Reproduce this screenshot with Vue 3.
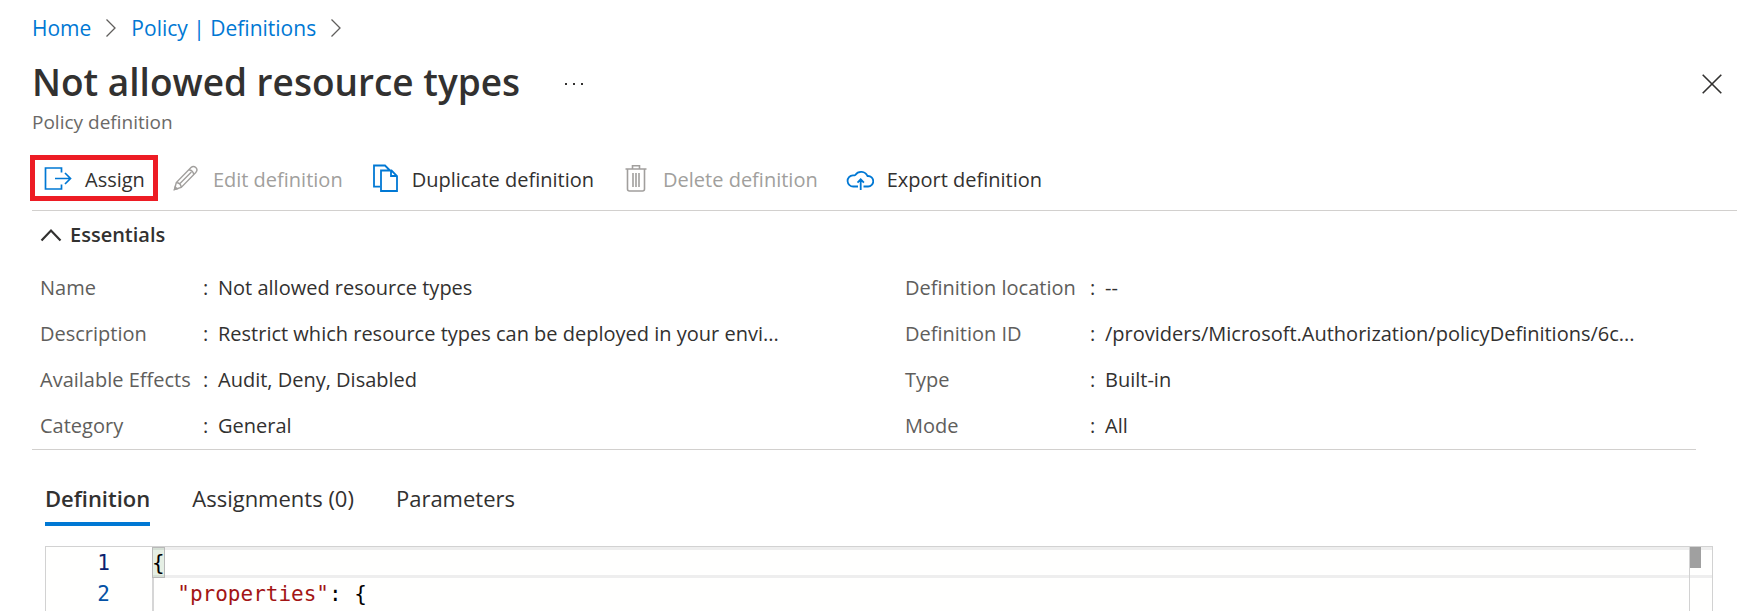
<script setup>
import { ref } from 'vue'

const leftFacts = [
  { label: 'Name', value: 'Not allowed resource types' },
  { label: 'Description', value: 'Restrict which resource types can be deployed in your envi...' },
  { label: 'Available Effects', value: 'Audit, Deny, Disabled' },
  { label: 'Category', value: 'General' },
]
const rightFacts = [
  { label: 'Definition location', value: '--' },
  { label: 'Definition ID', value: '/providers/Microsoft.Authorization/policyDefinitions/6c...' },
  { label: 'Type', value: 'Built-in' },
  { label: 'Mode', value: 'All' },
]
const tabs = ['Definition', 'Assignments (0)', 'Parameters']
const activeTab = ref('Definition')
const open = ref(true)
</script>

<template>
  <main class="page">
    <nav class="crumbs" aria-label="Breadcrumb">
      <a href="#">Home</a>
      <svg width="12" height="20" viewBox="0 0 12 20" aria-hidden="true"><path d="M1.500 1.500 10 10 1.500 18.500" /></svg>
      <a href="#">Policy | Definitions</a>
      <svg width="12" height="20" viewBox="0 0 12 20" aria-hidden="true"><path d="M1.500 1.500 10 10 1.500 18.500" /></svg>
    </nav>

    <header class="head">
      <h1>Not allowed resource types</h1>
      <button class="icon-btn more" type="button" aria-label="More">
        <svg width="20" height="4" viewBox="0 0 20 4"><path d="M1 1h2v2H1zM9 1h2v2H9zM17 1h2v2h-2z" fill="#323130" /></svg>
      </button>
      <button class="icon-btn close" type="button" aria-label="Close">
        <svg width="20" height="20" viewBox="0 0 20 20" fill="none" stroke="#323130" stroke-width="1.600"><path d="M.7.7l18.600 18.600M19.300.7.7 19.300" /></svg>
      </button>
    </header>
    <p class="subtitle">Policy definition</p>

    <div class="toolbar">
      <button class="cmd marked" type="button">
        <svg width="28" height="28" viewBox="0 0 28 28" fill="none" stroke="#0078d4" stroke-width="1.700">
          <path d="M17.500 8.500V4H1.500v21h16v-4.500M11 14.500h15.500M21 9l5.500 5.500-5.500 5.500" />
        </svg>
        <span>Assign</span>
      </button>
      <button class="cmd" type="button" disabled>
        <svg width="28" height="28" viewBox="0 0 28 28" fill="none" stroke="#a19f9d" stroke-width="1.400">
          <path d="M2.500 25.500l1.800-7L19 3.600a3.400 3.400 0 0 1 4.800 0 3.400 3.400 0 0 1 0 4.800L9.200 23.500zM4.300 18.500c2.600.2 4.700 2.200 4.900 5M17 5.700c2.500.4 4.300 2.200 4.700 4.700M19.400 8L7.500 20" />
          <path d="M2.500 25.500l.7-2.600 1.900 1.900z" fill="#a19f9d" />
        </svg>
        <span>Edit definition</span>
      </button>
      <button class="cmd" type="button">
        <svg width="28" height="28" viewBox="0 0 28 28" fill="none" stroke="#0078d4" stroke-width="1.800">
          <path d="M9 22.600H3V1.500h11l4.500 4.500M10 6.500h10.500l5.500 5.500v15H10zM20 6.500V12h6" />
        </svg>
        <span>Duplicate definition</span>
      </button>
      <button class="cmd" type="button" disabled>
        <svg width="28" height="28" viewBox="0 0 28 28" fill="none" stroke="#a19f9d" stroke-width="1.600">
          <path d="M3.500 5h21M10.500 5V1.800h7V5M5.500 5v20a2 2 0 0 0 2 2h13a2 2 0 0 0 2-2V5M11 9v14M14 9v14M17 9v14" />
        </svg>
        <span>Delete definition</span>
      </button>
      <button class="cmd" type="button">
        <svg width="28" height="28" viewBox="0 0 28 28" fill="none" stroke="#0078d4" stroke-width="1.800">
          <path d="M12 22.500H7.500a5.500 5.500 0 0 1-.6-11.200c1.100 0 1.800 0 2.400-.4a7 7 0 0 1 12.200 1.100h.4a5.200 5.200 0 0 1 .2 10.500H17.500M14.700 26V15.500M11.500 18.700l3.200-3.300 3.200 3.300" />
        </svg>
        <span>Export definition</span>
      </button>
    </div>

    <section class="essentials">
      <button class="toggle" type="button" :aria-expanded="open" @click="open = !open">
        <svg width="22" height="14" viewBox="0 0 22 14" fill="none" stroke="#323130" stroke-width="2.200"><path d="M1.500 12.500 11 2.500l9.500 10" /></svg>
        Essentials
      </button>
      <div v-if="open" class="facts">
        <dl class="left">
          <div v-for="f in leftFacts" :key="f.label">
            <dt>{{ f.label }}</dt><dd>{{ f.value }}</dd>
          </div>
        </dl>
        <dl class="right">
          <div v-for="f in rightFacts" :key="f.label">
            <dt>{{ f.label }}</dt><dd>{{ f.value }}</dd>
          </div>
        </dl>
      </div>
    </section>

    <div class="tabs" role="tablist">
      <button
        v-for="t in tabs" :key="t" type="button" role="tab"
        :aria-selected="t === activeTab" :class="{ active: t === activeTab }"
        @click="activeTab = t"
      >{{ t }}</button>
    </div>

    <section class="editor">
      <div class="line current">
        <span class="num">1</span>
        <code><span class="bracket">{</span></code>
      </div>
      <div class="line">
        <span class="num">2</span>
        <code class="guide">{{ '  ' }}<span class="key">"properties"</span>: {</code>
      </div>
      <div class="line"><span class="num"></span><code class="guide">{{ '  ' }}<span class="indent"></span></code></div>
      <div class="ruler"><div class="thumb"></div></div>
    </section>
  </main>
</template>

<style>
html { background: #fff; }
body { overflow: hidden; }
</style>

<style scoped>
.page {
  height: 100vh;
  overflow: hidden;
  display: flex;
  flex-direction: column;
  font: 20px/28px "Open Sans", "Noto Sans", sans-serif;
  color: #323130;
}
.page > * { flex-shrink: 0; }
button {
  font: inherit;
  color: inherit;
  background: none;
  border: 0;
  padding: 0;
  margin: 0;
  display: flex;
  align-items: center;
}
.crumbs {
  display: flex;
  align-items: center;
  gap: 14px;
  padding: 14px 32px 0;
  font-size: 21px;
}
.crumbs a { color: #0078d4; text-decoration: none; }
.crumbs svg { fill: none; stroke: #605e5c; stroke-width: 1.3; }
.head {
  display: flex;
  align-items: center;
  height: 52px;
  margin-top: 16px;
  padding: 0 15px 0 32px;
}
h1 { margin: 0; padding-bottom: 4px; font-size: 37px; line-height: 48px; font-weight: 600; }
.more { margin-left: 44px; }
.close { margin-left: auto; }
.subtitle { margin: 0 32px; font-size: 19px; line-height: 24px; color: #6b6967; }
.toolbar {
  display: flex;
  align-items: center;
  margin: 21px 0 0 32px;
  padding-bottom: 9px;
  border-bottom: 1px solid #d2d0ce;
  gap: 28px;
}
.cmd { gap: 13px; height: 46px; white-space: nowrap; }
.cmd span { padding-top: 4px; }
.cmd:disabled { color: #a19f9d; }
.marked {
  border: 5px solid #ed1c24;
  margin: 0 -14px 0 -2px;
  padding: 0 8px 0 9px;
}
.essentials { margin: 0 41px 0 32px; border-bottom: 1px solid #d2d0ce; }
.toggle { gap: 8px; margin: 10px 0 0 8px; font-weight: 600; }
.facts { display: grid; grid-template-columns: 865px 1fr; padding: 16px 0 0 8px; }
dl { margin: 0; }
dl > div { display: flex; align-items: center; height: 46px; }
dt { color: #605e5c; white-space: nowrap; }
.left dt { width: 163px; }
.right dt { width: 185px; }
dd { margin: 0; display: flex; white-space: nowrap; }
dd::before { content: ":"; width: 15px; }
.tabs { display: flex; gap: 42px; margin: 31px 45px 0; font-size: 22px; }
.tabs button { height: 45px; padding-bottom: 7px; box-sizing: border-box; border-bottom: 4px solid transparent; }
.tabs .active { font-weight: 600; border-bottom-color: #0078d4; }
.editor {
  position: relative;
  margin: 20px 24px 0 45px;
  border: 1px solid #d2d2d2;
  background: #fffffe;
  font: 21px/32px "DejaVu Sans Mono", monospace;
  color: #000;
}
.line { display: flex; height: 31px; }
.num { width: 64px; padding-right: 42px; text-align: right; color: #0451a5; }
.current .num { color: #0b216f; }
code { flex: 1; box-sizing: border-box; font: inherit; white-space: pre; }
.current code { box-shadow: inset 0 3px #eee, inset 0 -3px #eee; }
.guide { box-shadow: inset 2px 0 #d6d6d6; }
.indent { border-left: 1px solid #d6d6d6; }
.key { color: #a31515; }
.bracket { display: inline-block; height: 31px; box-shadow: inset 0 0 0 1px #b9b9b9; background: rgba(0, 100, 0, 0.1); }
.ruler { position: absolute; top: 0; right: 0; bottom: 0; width: 22px; border-left: 1px solid #d2d2d2; }
.thumb { width: 11px; height: 21px; background: #a0a0a0; }
</style>
